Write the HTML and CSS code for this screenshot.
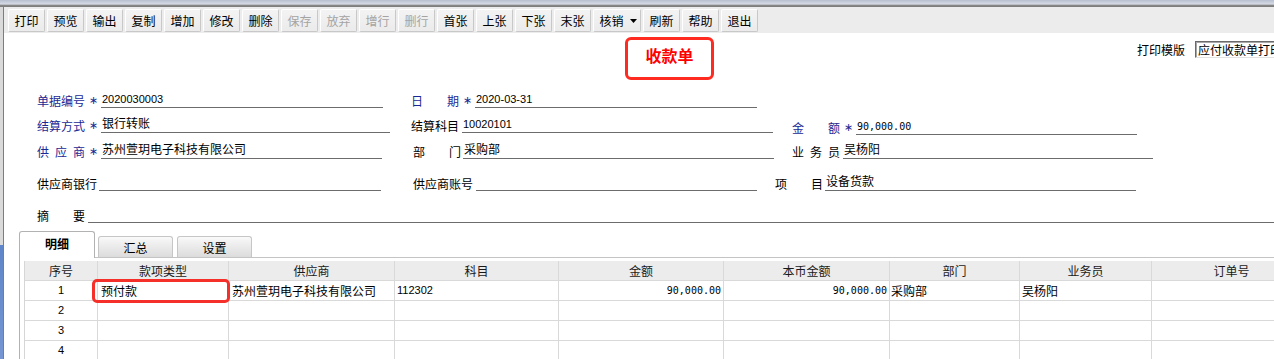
FILE: index.html
```html
<!DOCTYPE html>
<html lang="zh-CN">
<head>
<meta charset="utf-8">
<title>收款单</title>
<link rel="stylesheet" href="styles.css">
</head>
<body>
<div class="topbar"></div>
<div class="main">
  <div class="strip"></div>
  <div class="window">
    <div class="toolbar">
      <div class="btn">打印</div>
      <div class="btn">预览</div>
      <div class="btn">输出</div>
      <div class="btn">复制</div>
      <div class="btn">增加</div>
      <div class="btn">修改</div>
      <div class="btn">删除</div>
      <div class="btn off">保存</div>
      <div class="btn off">放弃</div>
      <div class="btn off">增行</div>
      <div class="btn off">删行</div>
      <div class="btn">首张</div>
      <div class="btn">上张</div>
      <div class="btn">下张</div>
      <div class="btn">末张</div>
      <div class="btn drop">核销<svg class="caret" width="7" height="4" viewBox="0 0 7 4"><path d="M0 0h7L3.5 4z" fill="#000"/></svg></div>
      <div class="btn">刷新</div>
      <div class="btn">帮助</div>
      <div class="btn">退出</div>
    </div>

    <div class="head">
      <div class="title">收款单</div>
      <div class="tpl">
        <span>打印模版</span>
        <div class="tpl-sel">应付收款单打印模版</div>
      </div>
    </div>

    <div class="form">
      <div class="row r1">
        <div class="field fa">
          <span class="lbl req">单据编号</span><span class="star">∗</span>
          <span class="val num v282">2020030003</span>
        </div>
        <div class="field fb">
          <span class="lbl req"><i>日</i><i>期</i></span><span class="star">∗</span>
          <span class="val num v282">2020-03-31</span>
        </div>
      </div>

      <div class="row r2">
        <div class="field fa">
          <span class="lbl req">结算方式</span><span class="star">∗</span>
          <span class="val v289">银行转账</span>
        </div>
        <div class="field fb">
          <span class="lbl">结算科目</span>
          <span class="val num v311">10020101</span>
        </div>
        <div class="field low">
          <span class="lbl req"><i>金</i><i>额</i></span><span class="star">∗</span>
          <span class="val mono v281">90,000.00</span>
        </div>
      </div>

      <div class="row r3">
        <div class="field fa">
          <span class="lbl req"><i>供</i><i>应</i><i>商</i></span><span class="star">∗</span>
          <span class="val v281">苏州萱玥电子科技有限公司</span>
        </div>
        <div class="field fb in">
          <span class="lbl tight"><i>部</i><i>门</i></span>
          <span class="val v311">采购部</span>
        </div>
        <div class="field">
          <span class="lbl"><i>业</i><i>务</i><i>员</i></span>
          <span class="val v310">吴杨阳</span>
        </div>
      </div>

      <div class="row r4">
        <div class="field fa">
          <span class="lbl w5 tight">供应商银行</span>
          <span class="val v282"></span>
        </div>
        <div class="field fb s in">
          <span class="lbl w5">供应商账号</span>
          <span class="val v281"></span>
        </div>
        <div class="field">
          <span class="lbl tight"><i>项</i><i>目</i></span>
          <span class="val v311">设备货款</span>
        </div>
      </div>

      <div class="row r5">
        <div class="field grow">
          <span class="lbl"><i>摘</i><i>要</i></span>
          <span class="val grow"></span>
        </div>
      </div>
    </div>

    <div class="tabs">
      <div class="tab on">明细</div>
      <div class="tab">汇总</div>
      <div class="tab second">设置</div>
    </div>

    <div class="panel">
      <div class="grid">
        <div class="hd">序号</div>
        <div class="hd">款项类型</div>
        <div class="hd">供应商</div>
        <div class="hd">科目</div>
        <div class="hd">金额</div>
        <div class="hd">本币金额</div>
        <div class="hd">部门</div>
        <div class="hd">业务员</div>
        <div class="hd">订单号</div>

        <div class="cl no">1</div>
        <div class="cl pl3 mark">预付款<span class="hl"></span></div>
        <div class="cl pl3">苏州萱玥电子科技有限公司</div>
        <div class="cl n11">112302</div>
        <div class="cl amt">90,000.00</div>
        <div class="cl amt">90,000.00</div>
        <div class="cl pl1">采购部</div>
        <div class="cl">吴杨阳</div>
        <div class="cl"></div>

        <div class="cl no">2</div>
        <div class="cl"></div><div class="cl"></div><div class="cl"></div><div class="cl"></div>
        <div class="cl"></div><div class="cl"></div><div class="cl"></div><div class="cl"></div>

        <div class="cl no">3</div>
        <div class="cl"></div><div class="cl"></div><div class="cl"></div><div class="cl"></div>
        <div class="cl"></div><div class="cl"></div><div class="cl"></div><div class="cl"></div>

        <div class="cl no">4</div>
        <div class="cl"></div><div class="cl"></div><div class="cl"></div><div class="cl"></div>
        <div class="cl"></div><div class="cl"></div><div class="cl"></div><div class="cl"></div>
      </div>
    </div>
  </div>
</div>
</body>
</html>
```

FILE: styles.css
```css
* { box-sizing: border-box; margin: 0; padding: 0; }

html, body {
  width: 1274px;
  height: 359px;
  overflow: hidden;
  background: #fff;
}

body {
  font-family: "Noto Sans CJK SC", "Liberation Sans", sans-serif;
  font-size: 12px;
  color: #000;
}

i { font-style: normal; }

.topbar {
  height: 7px;
  background: linear-gradient(#b7bfcf, #d6dbe5 60%, #8a8a8a 72%, #7a7a7a 100%);
}

.main {
  display: flex;
  height: 352px;
}

.strip {
  width: 3px;
  flex: none;
  background: linear-gradient(#dadada 0, #dadada 238px, #5f86c9 238px, #7596d2 100%);
}

.window {
  flex: 1;
  min-width: 0;
  border-left: 1px solid #7d7d7d;
  overflow: hidden;
}

/* toolbar */
.toolbar {
  height: 26px;
  background: #ececec;
  display: flex;
  align-items: flex-start;
  gap: 2px;
  padding: 2px 0 0 4px;
}

.btn {
  width: 37px;
  height: 23px;
  flex: none;
  display: flex;
  align-items: center;
  justify-content: center;
  background: linear-gradient(#f3f3f3, #ebebeb);
  border: 1px solid;
  border-color: #ffffff #c8c8c8 #c8c8c8 #ffffff;
  border-radius: 2px;
  font-size: 12px;
  color: #000;
}

.btn.off { color: #a4a4a4; }

.btn.drop {
  width: 48px;
  gap: 6px;
  padding-left: 2px;
}

.caret { display: block; }

/* header with title */
.head {
  height: 55px;
  display: flex;
  align-items: flex-start;
  padding-left: 621px;
}

.title {
  flex: none;
  margin-top: 4px;
  width: 89px;
  height: 43px;
  border: 3px solid #ff2b20;
  border-radius: 6px;
  padding-top: 5px;
  color: #ff0000;
  font-size: 16px;
  font-weight: bold;
  line-height: 20px;
  text-align: center;
}

.tpl {
  flex: none;
  margin-left: 423px;
  margin-top: 8px;
  display: flex;
  align-items: center;
  gap: 10px;
  white-space: nowrap;
}

.tpl-sel {
  width: 130px;
  height: 17px;
  border: 1px solid;
  border-color: #6a6a6a #e2e2e2 #e2e2e2 #6a6a6a;
  box-shadow: inset 1px 1px 0 #a8a8a8;
  padding-left: 2px;
  line-height: 15px;
}

/* form */
.form { padding-left: 33px; }

.row {
  display: flex;
  align-items: flex-end;
}

.r1 { height: 20px; }
.r2 { height: 25px; }
.r3 { height: 26px; }
.r4 { height: 32px; }
.r5 { height: 32px; }

.field {
  display: flex;
  align-items: flex-end;
  flex: none;
}

.field.grow { flex: 1; }

.fa { width: 374px; }
.fb { width: 381px; }
.fb.s { width: 364px; }
.fb.in { padding-left: 2px; }
.field.low { margin-bottom: -2px; }

.lbl {
  width: 48px;
  flex: none;
  display: flex;
  justify-content: space-between;
  line-height: 14px;
  white-space: nowrap;
  margin-right: 3px;
}

.lbl.w5 { width: 60px; }
.lbl.tight { margin-right: 2px; }

.req { color: #1a2894; }

.star {
  width: 15px;
  flex: none;
  margin-left: -2px;
  text-align: center;
  color: #1a2894;
  font: 11px/14px "DejaVu Sans", sans-serif;
}

.val {
  height: 17px;
  flex: none;
  border-bottom: 1px solid #6c6c6c;
  line-height: 14px;
  padding-left: 1px;
  white-space: nowrap;
}

.val.grow { flex: 1; }

.val.num {
  font: 11px/14px "Liberation Sans", sans-serif;
  padding-top: 1px;
}

.val.mono {
  font: 10px/14px "DejaVu Sans Mono", monospace;
  padding-top: 2px;
}

.v281 { width: 281px; }
.v282 { width: 282px; }
.v289 { width: 289px; }
.v310 { width: 310px; }
.v311 { width: 311px; }

/* tabs */
.tabs {
  margin: 8px 0 0 15px;
  height: 27px;
  display: flex;
  align-items: flex-end;
  border-bottom: 1px solid #c4c4c4;
}

.tab {
  width: 75px;
  height: 21px;
  margin-left: 3px;
  border: 1px solid #c6c6c6;
  border-bottom: none;
  border-radius: 3px 3px 0 0;
  background: linear-gradient(#fafafa, #f1f1f1 25%, #dcdcdc);
  text-align: center;
  line-height: 22px;
}

.tab.second { margin-left: 4px; }

.tab.on {
  width: 76px;
  height: 27px;
  margin-left: 0;
  margin-bottom: -1px;
  background: #fff;
  border-color: #b2b2b2;
  font-weight: bold;
  line-height: 24px;
}

/* grid panel */
.panel {
  margin-left: 15px;
  height: 120px;
  border-left: 1px solid #b2b2b2;
  padding: 3px 0 0 4px;
}

.grid {
  display: grid;
  grid-template-columns: 73px 131px 166px 164px 165px 166px 130px 132px 160px;
  grid-auto-rows: 20px;
  border-left: 1px solid #d6d6d6;
}

.hd, .cl {
  border-right: 1px solid #d9d9d9;
  border-bottom: 1px solid #d9d9d9;
  line-height: 19px;
  white-space: nowrap;
}

.hd {
  background: #ececec;
  text-align: center;
  color: #1a1a1a;
}

.cl {
  background: #fff;
  padding-left: 2px;
}

.cl.pl3 { padding-left: 3px; }
.cl.pl1 { padding-left: 1px; }

.cl.no {
  text-align: center;
  padding-left: 0;
  font: 11px/19px "Liberation Sans", sans-serif;
}

.cl.n11 { font: 11px/19px "Liberation Sans", sans-serif; }

.cl.amt {
  text-align: right;
  padding: 0 2px 0 0;
  font: 10px/19px "DejaVu Sans Mono", monospace;
}

.mark { position: relative; }

.hl {
  position: absolute;
  left: -6px;
  top: -2px;
  width: 138px;
  height: 24px;
  border: 3px solid #f5302a;
  border-radius: 5px;
}
```
